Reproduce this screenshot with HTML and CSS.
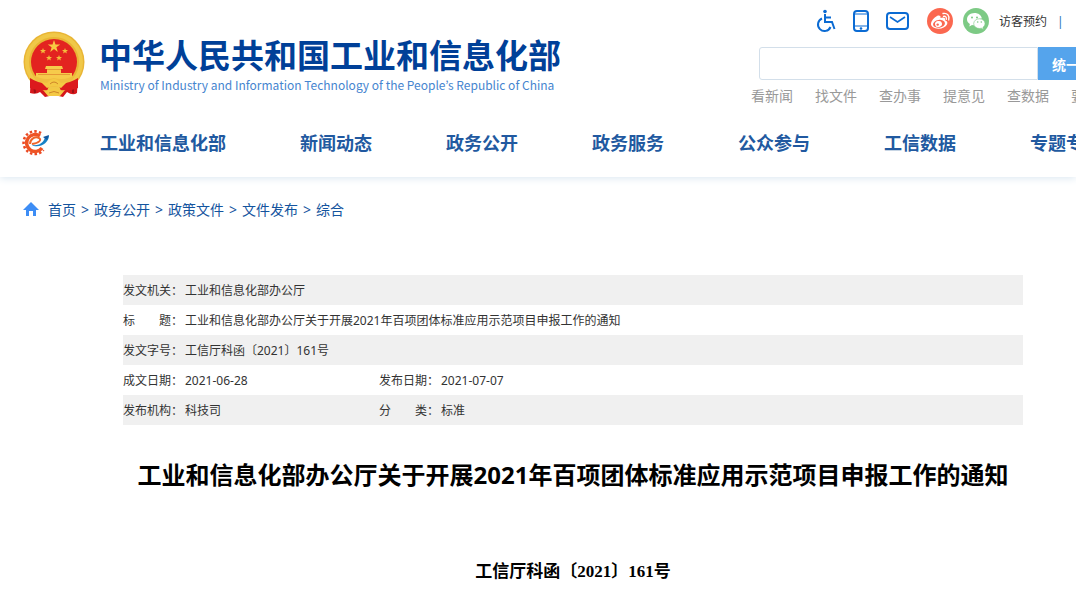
FILE: index.html
```html
<!DOCTYPE html>
<html lang="zh-CN">
<head>
  <meta charset="utf-8">
  <title>工业和信息化部办公厅关于开展2021年百项团体标准应用示范项目申报工作的通知</title>
  <link rel="stylesheet" href="styles.css">
</head>

<body>
<header class="header">
  <div class="top">
    <a class="brand" href="#">
      <svg class="emblem" width="62" height="68" viewBox="0 0 62 68" aria-hidden="true">
        <path d="M8 45 L7 62 Q13 64 17 61 L22 66 Q31 63 40 66 L44 61 Q50 65 54 62 L55 45Z" fill="#d5171b"/>
        <path d="M11 51 L12 62 M50 51 L50 62" stroke="#9e1015" stroke-width="2"/>
        <circle cx="31" cy="31" r="30.500" fill="#e9b535"/>
        <circle cx="31" cy="31" r="27" fill="none" stroke="#f0c848" stroke-width="4"/>
        <circle cx="31" cy="31" r="23" fill="#e32320"/>
        <path d="M31 9 l1.500 4.500h4.700l-3.800 2.800 1.400 4.600-3.800-2.800-3.800 2.800 1.400-4.600-3.800-2.800h4.700z" fill="#f8c842"/>
        <path id="star" d="M20 17 l.8 2h2.200l-1.700 1.400.6 2.200-1.900-1.300-1.900 1.300.6-2.200-1.700-1.400h2.200z" fill="#f4bd3c"/>
        <use href="#star" x="22"/>
        <use href="#star" x="6" y="7"/>
        <use href="#star" x="16" y="7"/>
        <path d="M23 35h16l1 3h-2v4h11v6H13v-6h11v-4h-2z" fill="#f6cb4b"/>
        <path d="M24 38.500h14 M15 43.500h32" stroke="#e59a35" stroke-width="1"/>
        <path d="M10 44 Q21 50 31 47 Q42 50 52 44 Q47 54 37 56 H25 Q15 54 10 44" fill="#f0bf41"/>
        <path d="M7 47 Q18 54 27 52 L24 60 Q14 60 7 57z M55 47 Q44 54 35 52 L38 60 Q48 60 55 57z" fill="#dc1a1d"/>
        <path d="M24 52q7-8 14 0l6-1-6 6q-7-4-14 0l-6-6z M20 59q6 1 11-2 5 3 11 2l-5 6H25z" fill="#f4c944"/>
        <path d="M27 53q4-4 8 0M26 62q5-3 10 0" fill="none" stroke="#cf8629"/>
      </svg>
      <span class="names">
        <span class="name-cn">中华人民共和国工业和信息化部</span>
        <span class="name-en" lang="en">Ministry of Industry and Information Technology of the People’s Republic of China</span>
      </span>
    </a>

    <div class="tools">
      <div class="links">
        <a href="#" aria-label="无障碍"><svg width="20" height="24" viewBox="0 0 20 24" fill="none" stroke="#0b6bd3" stroke-width="2"><circle cx="9" cy="2.500" r="1.800" fill="#0b6bd3" stroke="none"/><path d="M9 5v8h7l2.500 7M9 8.500h6M6 9.500A6.500 6.500 0 1 0 14.500 18"/></svg></a>
        <a href="#" aria-label="手机版"><svg width="18" height="24" viewBox="0 0 18 24" fill="none" stroke="#0b6bd3" stroke-width="2"><rect x="2" y="2" width="14" height="20" rx="3"/><path d="M2 5h14M2 17h14" stroke-width="1"/><circle cx="9" cy="19.500" r="1.300" fill="#0b6bd3" stroke="none"/></svg></a>
        <a href="#" aria-label="邮箱"><svg width="23" height="24" viewBox="0 0 23 24" fill="none" stroke="#0b6bd3" stroke-width="2"><rect x="1" y="4" width="21" height="16" rx="3"/><path d="M4 8l7.500 5L19 8" stroke-width="1.600"/></svg></a>
        <a class="round" href="#" aria-label="微博"><svg width="26" height="26" viewBox="0 0 26 26"><circle cx="13" cy="13" r="13" fill="#fb6850"/><path d="M10 8c2-1 4-.5 3.500 2 3-1.200 5.500-.5 4.500 2.300 2 .7 3 2.200 2 4.200-1.300 2.800-5 4.300-8.700 4.200C7 20.500 4 18.600 4 16c0-2.800 3-6.500 6-8z" fill="#fff"/><ellipse cx="12" cy="15.800" rx="6" ry="3.900" transform="rotate(-8 12 15.800)" fill="#fb6850"/><ellipse cx="11.500" cy="16" rx="3.500" ry="3" transform="rotate(-15 11.500 16)" fill="#fff"/><circle cx="10.700" cy="16.600" r="1.200" fill="#fb6850"/><path d="M16 5.500c4-1 7 2.300 5.700 6.500M16.500 8.300c2-.4 3.300 1 2.800 3" fill="none" stroke="#fff" stroke-width="1.300" stroke-linecap="round"/></svg></a>
        <a href="#" aria-label="微信"><svg width="26" height="26" viewBox="0 0 26 26"><circle cx="13" cy="13" r="13" fill="#7dca85"/><path d="M11.500 5C7.300 5 4 7.800 4 11.200c0 2 1 3.700 2.900 4.800l-.6 2.400 2.700-1.500c1 .3 1.700.4 2.700.3-.8-4 2.500-7 7.200-6.800C18.300 7.200 15.300 5 11.500 5z" fill="#fff"/><path d="M22 15.500c0-2.700-2.700-4.700-5.600-4.700-3.200 0-5.700 2.100-5.700 4.800s2.500 4.900 5.700 4.900c.7 0 1.300-.1 2-.3l2 1.200-.5-2c1.300-1 2.100-2.400 2.100-3.900z" fill="#fff" stroke="#7dca85" stroke-width=".6"/><g fill="#7dca85"><circle cx="9" cy="9.500" r="1"/><circle cx="14" cy="9.500" r="1"/><circle cx="14.700" cy="14" r=".8"/><circle cx="18.300" cy="14" r=".8"/></g></svg></a>
        <a class="visit" href="#">访客预约</a>
        <span class="bar">|</span>
      </div>
      <form class="search">
        <input type="text" aria-label="搜索">
        <button type="button">统一搜索</button>
      </form>
      <div class="quick">
        <a href="#">看新闻</a>
        <a href="#">找文件</a>
        <a href="#">查办事</a>
        <a href="#">提意见</a>
        <a href="#">查数据</a>
        <a href="#">要留言</a>
      </div>
    </div>
  </div>

  <nav class="nav">
    <svg width="28" height="26" viewBox="0 0 28 26" fill="none" aria-hidden="true">
      <path d="M20 3.200A11.300 11.300 0 1 0 22.500 20" stroke="#ea4822" stroke-width="2.600" stroke-dasharray="2.400 2.200"/>
      <path d="M19 6A8.500 8.500 0 1 0 21 18" stroke="#ee5424" stroke-width="3.400"/>
      <path d="M9 14C9 9 14 6 18 8c3 2 0 5-7 6" stroke="#ef6428" stroke-width="2"/>
      <path d="M10 14.500c5 2 12 0 14-7l4-2c0 8-11 14-18 9z" fill="#1682c6"/>
      <path d="M22 7l6-2-2 5z" fill="#14579d"/>
    </svg>
    <ul>
      <li><a href="#">工业和信息化部</a></li>
      <li><a href="#">新闻动态</a></li>
      <li><a href="#">政务公开</a></li>
      <li><a href="#">政务服务</a></li>
      <li><a href="#">公众参与</a></li>
      <li><a href="#">工信数据</a></li>
      <li><a href="#">专题专栏</a></li>
    </ul>
  </nav>
</header>

<div class="crumb">
  <svg width="16" height="14" viewBox="0 0 16 14" aria-hidden="true"><path d="M8 0L0 8h3v6h3V9h4v5h3V8h3z" fill="#3d8df5"/></svg>
  <a href="#">首页</a> &gt;
  <a href="#">政务公开</a> &gt;
  <a href="#">政策文件</a> &gt;
  <a href="#">文件发布</a> &gt;
  <a href="#">综合</a>
</div>

<main class="article">
  <table class="info">
    <colgroup><col class="label"><col class="value"><col class="label"><col></colgroup>
    <tr><th>发文机关：</th><td colspan="3">工业和信息化部办公厅</td></tr>
    <tr><th>标　　题：</th><td colspan="3">工业和信息化部办公厅关于开展2021年百项团体标准应用示范项目申报工作的通知</td></tr>
    <tr><th>发文字号：</th><td colspan="3">工信厅科函〔2021〕161号</td></tr>
    <tr><th>成文日期：</th><td>2021-06-28</td><th>发布日期：</th><td>2021-07-07</td></tr>
    <tr><th>发布机构：</th><td>科技司</td><th>分　　类：</th><td>标准</td></tr>
  </table>
  <h1>工业和信息化部办公厅关于开展2021年百项团体标准应用示范项目申报工作的通知</h1>
  <p class="number">工信厅科函〔2021〕161号</p>
</main>
</body>
</html>
```
FILE: styles.css
```css
* {box-sizing: border-box;}
body {margin: 0; background: #fff; color: #333; font-family: "Noto Sans", "Noto Sans CJK SC", sans-serif; font-size: 12px; overflow-x: hidden;}
a {color: inherit; text-decoration: none;}
svg {display: block; flex: none;}

/* header */
.header {box-shadow: 0 1px 8px #d9e6f0;}
.top {display: flex; height: 108px;}
.brand {display: flex; flex: 1; gap: 14px; padding: 31px 0 0 23px; white-space: nowrap;}
.names {display: flex; flex-direction: column; padding-top: 1px; font-family: "Noto Sans CJK SC", sans-serif;}
.name-cn {color: #004098; font-size: 33px; line-height: 44px; font-weight: bold;}
.name-en {color: #4685cf; font-family: "Noto Sans CJK KR", sans-serif; font-size: 12px; line-height: 18px; padding-left: 1px;}

.tools {flex: none; width: 325px; overflow: hidden; white-space: nowrap;}
.links {display: flex; align-items: center; gap: 10px; height: 42px; padding-left: 65px;}
.links a:nth-child(-n+2) {margin-right: 6px;}
.round {margin-left: 8px;}
.bar {color: #2474b5;}
.search {display: flex; height: 33px; margin: 5px 0 0 8px;}
.search input {flex: none; width: 279px; border: 1px solid #d3dfea; border-radius: 3px 0 0 3px; padding: 0 10px;}
.search button {flex: none; width: 84px; border: 0; background: #55a4ec; color: #fff; font: bold 14px "Noto Sans CJK SC", sans-serif;}
.quick {display: flex; gap: 22px; padding-top: 6px; color: #999; font-size: 14px; line-height: 20px;}

.nav {display: flex; align-items: center; height: 69px; padding-left: 21px; overflow: hidden;}
.nav ul {display: flex; gap: 74px; margin: 0; padding: 0 0 0 51px; list-style: none; white-space: nowrap;}
.nav li {color: #2159a0; font-size: 18px; line-height: 28px; font-weight: bold;}

.crumb {display: flex; align-items: center; gap: 5px; height: 20px; margin-top: 22px; padding-left: 23px; color: #14549e; font-size: 14px;}
.crumb svg {margin-right: 4px;}

/* article */
.article {padding: 56px 53px 0 123px;}
.info {width: 100%; border-collapse: collapse; table-layout: fixed;}
.info tr {height: 30px;}
.info tr:nth-child(odd) {background: #f0f0f0;}
.info th, .info td {padding: 2px 0 0; font-weight: normal; line-height: 18px; text-align: left; white-space: nowrap;}
.label {width: 62px;}
.value {width: 194px;}
h1 {margin: 32px 0 0; color: #000; font-size: 24px; line-height: 36px; text-align: center; white-space: nowrap;}
.number {margin: 67px 0 0; color: #000; font: bold 17px/24px "Liberation Serif", "Noto Sans CJK SC", serif; text-align: center;}
```
